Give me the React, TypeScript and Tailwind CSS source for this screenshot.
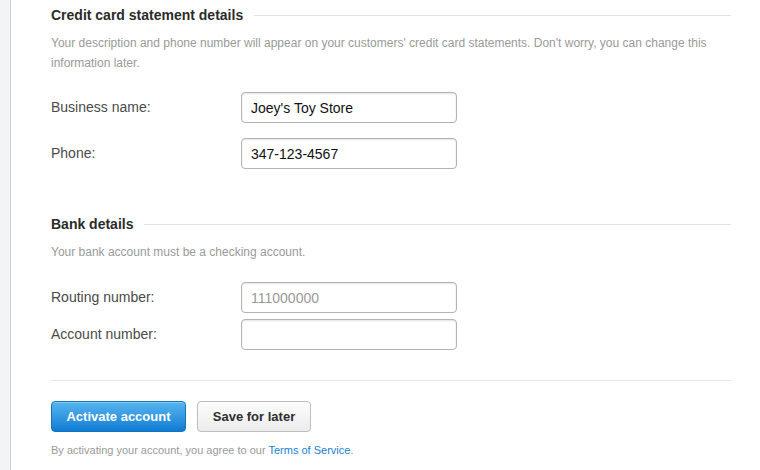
import React from "react";

function Row({ label, value, placeholder, className }: { label: string; value?: string; placeholder?: string; className?: string }) {
  return (
    <div className={`flex items-center ${className ?? ""}`}>
      <label className="w-[190px] text-[14px] text-[#4a4a4a]">{label}</label>
      <input
        defaultValue={value}
        placeholder={placeholder}
        className="h-[31px] w-[216px] rounded-[4px] border border-[#b3b3b3] bg-white px-[9px] text-[14px] text-[#111] shadow-[inset_0_1px_2px_rgba(0,0,0,0.12)] outline-none placeholder:text-[#9a9a9a]"
        style={{ fontFamily: '"Liberation Sans", Arial, sans-serif' }}
      />
    </div>
  );
}

function Heading({ children, className }: { children: React.ReactNode; className?: string }) {
  return (
    <div className={`flex items-center gap-[11px] ${className ?? ""}`}>
      <h2 className="whitespace-nowrap text-[14px] font-bold leading-[20px] text-[#2b2b2b]">{children}</h2>
      <div className="h-px flex-1 bg-[#e3e3e3]" />
    </div>
  );
}

export default function App() {
  return (
    <div
      className="flex h-[470px] w-[760px] overflow-hidden bg-white"
      style={{ fontFamily: '"Liberation Sans", Arial, Helvetica, sans-serif' }}
    >
      <div className="w-[11px] shrink-0 border-r border-[#c7ccd6] bg-[#f3f4f6]" />
      <div className="flex-1 pl-[40px] pr-[29px] pt-[5px]">
        <Heading>Credit card statement details</Heading>
        <p className="mt-[8px] text-[12px] leading-[20px] text-[#9a9a9a]">
          Your description and phone number will appear on your customers' credit card statements. Don't worry, you can change this information later.
        </p>
        <Row className="mt-[19px]" label="Business name:" value="Joey's Toy Store" />
        <Row className="mt-[15px]" label="Phone:" value="347-123-4567" />

        <Heading className="mt-[45px]">Bank details</Heading>
        <p className="mt-[8px] text-[12px] leading-[20px] text-[#9a9a9a]">Your bank account must be a checking account.</p>
        <Row className="mt-[20px]" label="Routing number:" placeholder="111000000" />
        <Row className="mt-[6px]" label="Account number:" />

        <div className="mt-[30px] h-px bg-[#e6e6e6]" />

        <div className="mt-[20px] flex gap-[11px]">
          <button className="h-[31px] w-[135px] rounded-[4px] border border-[#1471bb] bg-gradient-to-b from-[#55b5ef] to-[#0a7cd4] text-[13px] font-bold text-white shadow-[inset_0_1px_0_rgba(255,255,255,0.3)]">
            Activate account
          </button>
          <button className="h-[31px] w-[114px] rounded-[4px] border border-[#bdbdbd] bg-gradient-to-b from-[#fcfcfc] to-[#ececec] text-[13px] font-bold text-[#2e2e2e]">
            Save for later
          </button>
        </div>

        <p className="mt-[10px] text-[11px] leading-[16px] text-[#9a9a9a]">
          By activating your account, you agree to our <a className="text-[#1a7fd3]">Terms of Service</a>.
        </p>
      </div>
    </div>
  );
}
